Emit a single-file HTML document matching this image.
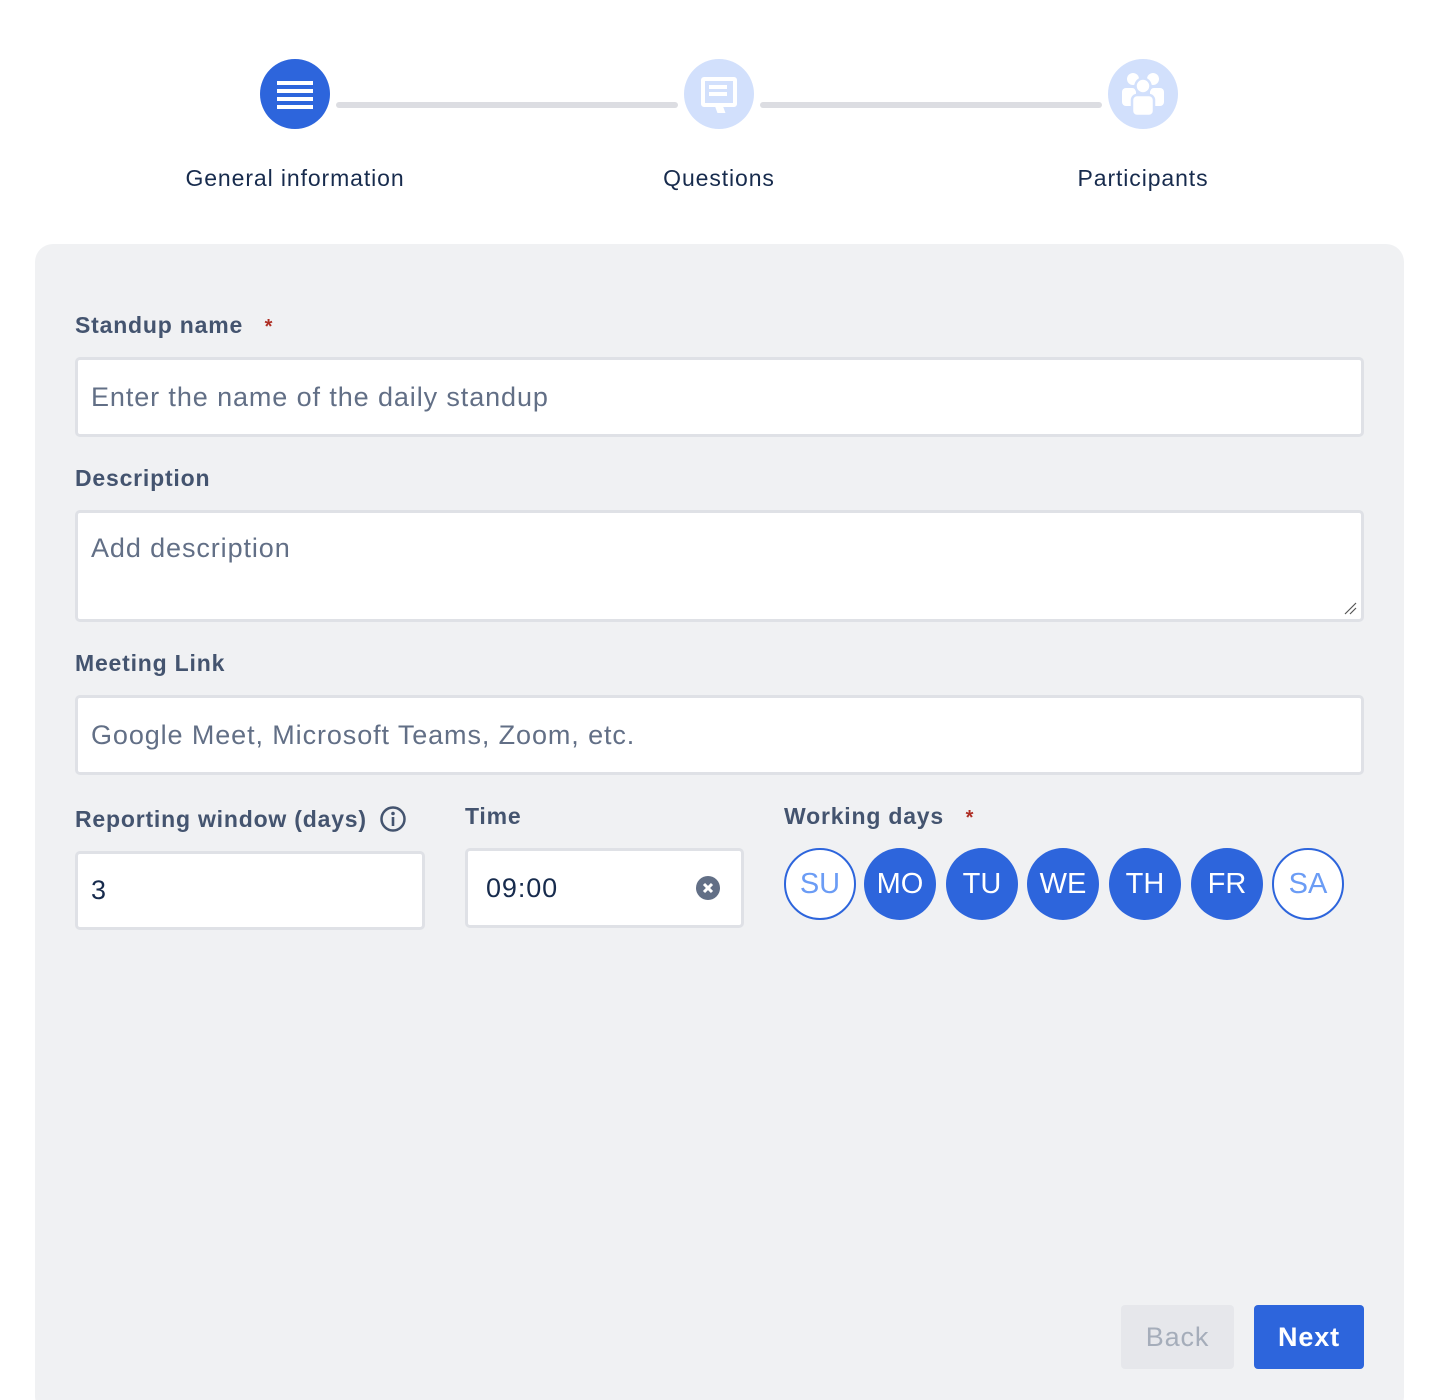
<!DOCTYPE html>
<html><head><meta charset="utf-8"><style>
*{box-sizing:border-box;margin:0;padding:0}
html,body{width:1438px;height:1400px;overflow:hidden}
body{background:#fff;font-family:"Liberation Sans",sans-serif;position:relative;letter-spacing:0.9px}
.a{position:absolute}
.step{width:70px;height:70px;border-radius:50%;top:59px}
.line{height:6px;background:#dcdde2;top:102px;border-radius:3px}
.slab{top:165px;font-size:23px;color:#172b4d;text-align:center;width:300px}
.panel{left:35px;top:244px;width:1369px;height:1170px;background:#f0f1f3;border-radius:18px}
.lab{font-size:23px;font-weight:bold;color:#44546f;left:75px;letter-spacing:0.8px}
.star{color:#ae2e24;font-size:20px}
.inp{background:#fff;border:3px solid #dfe1e6;border-radius:5px;font-size:27px;color:#626f86;padding-left:13px;display:flex;align-items:center}
.day{width:72px;height:72px;border-radius:50%;top:848px;font-size:29px;display:flex;align-items:center;justify-content:center;background:#2d65dc;color:#fff;letter-spacing:0}
.off{background:#fff;border:2px solid #2d65dc;color:#6b9cf5}
</style></head><body>
<div class="a step" style="left:260px;background:#2d65dc"></div>
<div class="a" style="left:277px;top:81px;width:36px;height:4px;background:#fff;box-shadow:0 8px 0 #fff,0 16px 0 #fff,0 24px 0 #fff"></div>
<div class="a line" style="left:336px;width:342px"></div>
<div class="a step" style="left:684px;background:#d2e0fc"></div>
<div class="a" style="left:701px;top:77px;width:36px;height:30px;border:4px solid #fff;border-radius:3px"></div>
<div class="a" style="left:709px;top:85px;width:18px;height:4px;background:#fff;box-shadow:0 7px 0 -0px #fff"></div>
<div class="a" style="left:716px;top:105px;width:8px;height:8px;background:#fff;transform:skewX(20deg)"></div>
<div class="a line" style="left:760px;width:342px"></div>
<div class="a step" style="left:1108px;background:#d2e0fc"></div>
<svg class="a" style="left:1108px;top:59px" width="70" height="70">
<circle cx="25" cy="20" r="6" fill="#fff"/><circle cx="45" cy="20" r="6" fill="#fff"/>
<rect x="14" y="29" width="14" height="18" rx="4" fill="#fff"/><rect x="42" y="29" width="14" height="18" rx="4" fill="#fff"/>
<circle cx="35" cy="27" r="7.5" fill="#fff" stroke="#d2e0fc" stroke-width="2.5"/>
<rect x="24" y="36" width="22" height="21" rx="5" fill="#fff" stroke="#d2e0fc" stroke-width="2.5"/>
</svg>
<div class="a slab" style="left:145px">General information</div>
<div class="a slab" style="left:569px">Questions</div>
<div class="a slab" style="left:993px">Participants</div>

<div class="a panel"></div>
<div class="a lab" style="top:312px">Standup name &nbsp;&nbsp;<span class="star">*</span></div>
<div class="a inp" style="left:75px;top:357px;width:1289px;height:80px">Enter the name of the daily standup</div>
<div class="a lab" style="top:465px">Description</div>
<div class="a inp" style="left:75px;top:510px;width:1289px;height:112px;align-items:flex-start;padding-top:20px">Add description</div>
<svg class="a" style="left:1343px;top:601px" width="14" height="14"><path d="M2 13L13 2M7 13L13 7" stroke="#555" stroke-width="1.2"/></svg>
<div class="a lab" style="top:650px">Meeting Link</div>
<div class="a inp" style="left:75px;top:695px;width:1289px;height:80px">Google Meet, Microsoft Teams, Zoom, etc.</div>
<div class="a lab" style="top:806px">Reporting window (days)</div>
<svg class="a" style="left:379px;top:805px" width="28" height="28"><circle cx="14" cy="14" r="11.5" fill="none" stroke="#44546f" stroke-width="2.5"/><circle cx="14" cy="8.5" r="1.8" fill="#44546f"/><rect x="12.7" y="12" width="2.6" height="9" fill="#44546f"/></svg>
<div class="a inp" style="left:75px;top:851px;width:350px;height:79px;color:#172b4d">3</div>
<div class="a lab" style="top:803px;left:465px">Time</div>
<div class="a inp" style="left:465px;top:848px;width:279px;height:80px;color:#172b4d;padding-left:18px">09:00</div>
<svg class="a" style="left:696px;top:876px" width="24" height="24"><circle cx="12" cy="12" r="12" fill="#626f86"/><path d="M8 8L16 16M16 8L8 16" stroke="#fff" stroke-width="3"/></svg>
<div class="a lab" style="top:803px;left:784px">Working days &nbsp;&nbsp;<span class="star">*</span></div>
<div class="a day off" style="left:784px">SU</div>
<div class="a day" style="left:864px">MO</div>
<div class="a day" style="left:946px">TU</div>
<div class="a day" style="left:1027px">WE</div>
<div class="a day" style="left:1109px">TH</div>
<div class="a day" style="left:1191px">FR</div>
<div class="a day off" style="left:1272px">SA</div>
<div class="a" style="left:1121px;top:1305px;width:113px;height:64px;background:#e6e7eb;border-radius:4px;color:#a5adba;font-size:27px;display:flex;align-items:center;justify-content:center">Back</div>
<div class="a" style="left:1254px;top:1305px;width:110px;height:64px;background:#2d65dc;border-radius:4px;color:#fff;font-size:27px;font-weight:bold;display:flex;align-items:center;justify-content:center">Next</div>
</body></html>
